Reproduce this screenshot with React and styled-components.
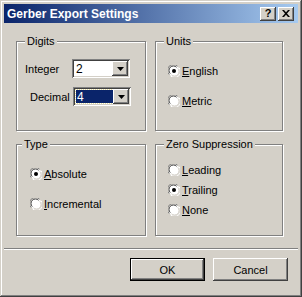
import React from "react";
import styled, { createGlobalStyle } from "styled-components";

const Global = createGlobalStyle`
  html, body { margin: 0; padding: 0; background: #d4d0c8; }
  body { font-family: "Liberation Sans", Arial, sans-serif; font-size: 11px; color: #000; }
  * { box-sizing: border-box; }
`;

const raised = `
  box-shadow: inset -1px -1px #404040, inset 1px 1px #ffffff, inset -2px -2px #808080, inset 2px 2px #d4d0c8;
`;

const Window = styled.div`
  width: 302px;
  height: 297px;
  padding: 4px;
  background: #d4d0c8;
  box-shadow: inset -1px -1px #404040, inset 1px 1px #d4d0c8, inset -2px -2px #808080, inset 2px 2px #ffffff;
  display: flex;
  flex-direction: column;
`;

const TitleBar = styled.div`
  height: 19px;
  display: flex;
  align-items: center;
  padding: 0 4px 0 3px;
  background: linear-gradient(to right, #0a246a, #a6caf0);
`;

const Title = styled.span`
  color: #fff;
  font-weight: bold;
  font-size: 12px;
  white-space: nowrap;
`;

const TitleButtons = styled.div`
  margin-left: auto;
  display: flex;
  gap: 2px;
`;

const CaptionButton = styled.div`
  width: 16px;
  height: 14px;
  background: #d4d0c8;
  ${raised}
  display: flex;
  align-items: center;
  justify-content: center;
  font-weight: bold;
  font-size: 11px;
  line-height: 1;
  padding-bottom: 1px;
`;

const Body = styled.div`
  padding: 18px 0 0 12px;
  display: grid;
  grid-template-columns: 130px 128px;
  grid-template-rows: 90px 92px;
  column-gap: 9px;
  row-gap: 13px;
`;

const GroupBox = styled.div`
  position: relative;
  border: 1px solid #808080;
  box-shadow: inset 1px 1px #ffffff, 1px 1px #ffffff;
  display: flex;
  flex-direction: column;
  padding-top: ${(p) => p.$top}px;
  padding-left: ${(p) => p.$left || 0}px;
  gap: ${(p) => p.$gap}px;
`;

const Legend = styled.span`
  position: absolute;
  top: -7px;
  left: ${(p) => p.$x}px;
  padding: 0 2px;
  background: #d4d0c8;
  line-height: 13px;
  white-space: nowrap;
`;

const FieldRow = styled.div`
  display: grid;
  grid-template-columns: ${(p) => p.$labelW}px 58px;
  align-items: center;
  padding-left: ${(p) => p.$indent}px;
  height: 19px;
`;

const Combo = styled.div`
  height: 19px;
  background: #fff;
  box-shadow: inset 1px 1px #808080, inset -1px -1px #ffffff, inset 2px 2px #404040, inset -2px -2px #d4d0c8;
  padding: 2px;
  display: flex;
`;

const ComboText = styled.div`
  flex: 1;
  display: flex;
  align-items: center;
  padding: 1px 0 1px 1px;
`;

const ComboValue = styled.span`
  flex: 1;
  height: 100%;
  display: flex;
  align-items: center;
  padding-left: 1px;
  font-size: 12px;
  color: ${(p) => (p.$selected ? "#fff" : "#000")};
  background: ${(p) => (p.$selected ? "#0a246a" : "transparent")};
  outline: ${(p) => (p.$selected ? "1px dotted #e8e0a0" : "none")};
  outline-offset: 0;
`;

const DropButton = styled.div`
  width: 16px;
  background: #d4d0c8;
  ${raised}
  display: flex;
  align-items: center;
  justify-content: center;
`;

const RadioRow = styled.div`
  display: flex;
  align-items: center;
  height: 13px;
  gap: 2px;
`;

const Key = styled.span`
  text-decoration: underline;
`;

const Separator = styled.div`
  margin-top: 12px;
  height: 2px;
  border-top: 1px solid #808080;
  border-bottom: 1px solid #ffffff;
`;

const ButtonRow = styled.div`
  margin-top: 8px;
  display: flex;
  justify-content: flex-end;
  gap: 8px;
  padding-right: 10px;
`;

const PushButton = styled.div`
  width: 75px;
  height: 23px;
  display: flex;
  align-items: center;
  justify-content: center;
  background: #d4d0c8;
  box-shadow: ${(p) =>
    p.$default
      ? "inset 0 0 0 1px #000, inset -2px -2px #404040, inset 2px 2px #ffffff, inset -3px -3px #808080"
      : "inset -1px -1px #404040, inset 1px 1px #ffffff, inset -2px -2px #808080"};
`;

const Arrow = () => (
  <svg width="7" height="4" viewBox="0 0 7 4">
    <path d="M0 0h7L3.5 4z" fill="#000" />
  </svg>
);

const Radio = ({ checked }) => (
  <svg width="12" height="12" viewBox="0 0 12 12">
    <circle cx="6" cy="6" r="5.5" fill="#fff" />
    <path d="M1.2 9.5A5.5 5.5 0 0 1 9.5 1.2" stroke="#808080" strokeWidth="1" fill="none" />
    <path d="M2.3 8.6A4.4 4.4 0 0 1 8.6 2.3" stroke="#404040" strokeWidth="1" fill="none" />
    <path d="M10.8 2.5A5.5 5.5 0 0 1 2.5 10.8" stroke="#fff" strokeWidth="1" fill="none" />
    <path d="M9.7 3.4A4.4 4.4 0 0 1 3.4 9.7" stroke="#d4d0c8" strokeWidth="1" fill="none" />
    {checked && <circle cx="6" cy="6" r="2" fill="#000" />}
  </svg>
);

const CloseIcon = () => (
  <svg width="8" height="7" viewBox="0 0 8 7">
    <path d="M0 0h2l2 2.3L6 0h2L5 3.5 8 7H6L4 4.7 2 7H0l3-3.5z" fill="#000" />
  </svg>
);

const RadioOption = ({ checked, k, rest }) => (
  <RadioRow>
    <Radio checked={checked} />
    <span>
      <Key>{k}</Key>
      {rest}
    </span>
  </RadioRow>
);

export default function App() {
  return (
    <>
      <Global />
      <Window>
        <TitleBar>
          <Title>Gerber Export Settings</Title>
          <TitleButtons>
            <CaptionButton>?</CaptionButton>
            <CaptionButton>
              <CloseIcon />
            </CaptionButton>
          </TitleButtons>
        </TitleBar>
        <Body>
          <GroupBox $top={17} $gap={9}>
            <Legend $x={8}>Digits</Legend>
            <FieldRow $indent={8} $labelW={47}>
              <span>Integer</span>
              <Combo>
                <ComboText>
                  <ComboValue>2</ComboValue>
                </ComboText>
                <DropButton>
                  <Arrow />
                </DropButton>
              </Combo>
            </FieldRow>
            <FieldRow $indent={13} $labelW={43}>
              <span>Decimal</span>
              <Combo>
                <ComboText>
                  <ComboValue $selected>4</ComboValue>
                </ComboText>
                <DropButton>
                  <Arrow />
                </DropButton>
              </Combo>
            </FieldRow>
          </GroupBox>
          <GroupBox $top={22} $gap={17} $left={12}>
            <Legend $x={8}>Units</Legend>
            <RadioOption checked k="E" rest="nglish" />
            <RadioOption k="M" rest="etric" />
          </GroupBox>
          <GroupBox $top={22} $gap={17} $left={13}>
            <Legend $x={5}>Type</Legend>
            <RadioOption checked k="A" rest="bsolute" />
            <RadioOption k="I" rest="ncremental" />
          </GroupBox>
          <GroupBox $top={18} $gap={7} $left={12}>
            <Legend $x={8}>Zero Suppression</Legend>
            <RadioOption k="L" rest="eading" />
            <RadioOption checked k="T" rest="railing" />
            <RadioOption k="N" rest="one" />
          </GroupBox>
        </Body>
        <Separator />
        <ButtonRow>
          <PushButton $default>OK</PushButton>
          <PushButton>Cancel</PushButton>
        </ButtonRow>
      </Window>
    </>
  );
}
